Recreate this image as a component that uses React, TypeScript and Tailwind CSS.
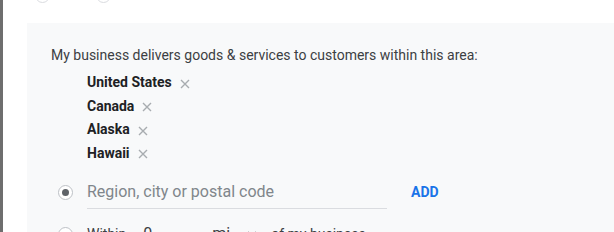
import React from "react";

const font = { fontFamily: "Roboto, 'Noto Sans', sans-serif" };

function X() {
  return (
    <svg width="10" height="10" viewBox="0 0 10 10" className="ml-[8px] mt-[2px]">
      <path d="M1 1 L9 9 M9 1 L1 9" stroke="#a8acb0" strokeWidth="1.4" fill="none" />
    </svg>
  );
}

function Radio({ checked }: { checked?: boolean }) {
  return (
    <div className="w-[15px] h-[15px] rounded-full border border-[#bdc1c6] bg-white flex items-center justify-center shrink-0">
      {checked && <div className="w-[7px] h-[7px] rounded-full bg-[#5f6368]" />}
    </div>
  );
}

export default function App() {
  const chips = ["United States", "Canada", "Alaska", "Hawaii"];
  return (
    <div className="w-[614px] h-[232px] overflow-hidden flex bg-white" style={font}>
      <div className="w-[3px] bg-[#6e6e6e] shrink-0" />
      <div className="flex-1 flex flex-col pl-[24px]">
        <div className="h-[23px] shrink-0 flex items-start pl-[8px] gap-[46px]">
          <div className="-mt-[12px] w-[15px] h-[15px] rounded-full border border-[#dadce0]" />
          <div className="-mt-[12px] w-[15px] h-[15px] rounded-full border border-[#dadce0]" />
        </div>
        <div className="flex-1 shrink-0 bg-[#f8f9fa] pl-[24px] pt-[22px]">
          <div className="text-[14px] leading-[20px] text-[#3c4043]">
            My business delivers goods &amp; services to customers within this area:
          </div>
          <div className="ml-[36px] mt-[6px] flex flex-col">
            {chips.map((c) => (
              <div key={c} className="h-[23.5px] flex items-center">
                <span className="text-[14px] font-bold text-[#202124]">{c}</span>
                <X />
              </div>
            ))}
          </div>
          <div className="mt-[10px] h-[34px] flex items-center pl-[7px]">
            <Radio checked />
            <div className="ml-[14px] w-[300px] h-[34px] flex items-center border-b border-[#dadce0]">
              <span className="text-[16px] text-[#80868b]">Region, city or postal code</span>
            </div>
            <span className="ml-[24px] text-[14px] font-bold text-[#1a73e8]">ADD</span>
          </div>
          <div className="mt-[15px] h-[20px] flex items-center pl-[7px] text-[14px] text-[#3c4043]">
            <Radio />
            <span className="ml-[14px]">Within</span>
            <span className="ml-[17px] w-[55px] text-[16px]">0</span>
            <span className="ml-[14px] text-[16px]">mi</span>
            <svg width="12" height="8" viewBox="0 0 12 8" className="ml-[16px]">
              <path d="M2 2 L6 6 L10 2" stroke="#5f6368" strokeWidth="1.5" fill="none" />
            </svg>
            <span className="ml-[13px]">of my business</span>
          </div>
        </div>
      </div>
    </div>
  );
}
